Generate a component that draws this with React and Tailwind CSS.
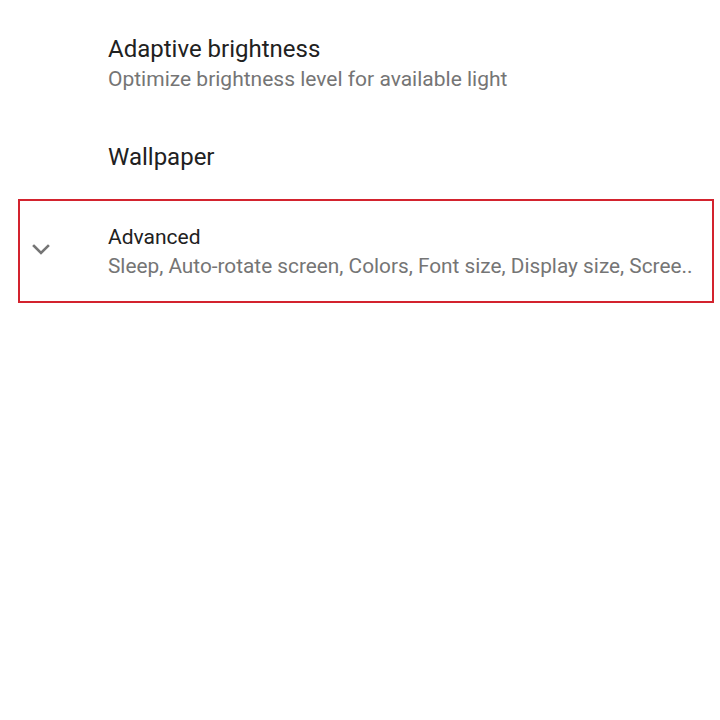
function Pref({ title, summary, className = '' }) {
  return (
    <div className={`pl-[108px] pr-6 ${className}`}>
      <p className="text-[24px] leading-[28px] text-[#212121]">{title}</p>
      {summary && (
        <p className="text-[21px] leading-[24px] text-[#757575] mt-[4px] whitespace-nowrap">{summary}</p>
      )}
    </div>
  )
}

export default function App() {
  return (
    <div className="w-[720px] h-[720px] bg-white overflow-hidden" style={{ fontFamily: 'Roboto, "Noto Sans", sans-serif' }}>
      <Pref
        className="pt-[35px]"
        title="Adaptive brightness"
        summary="Optimize brightness level for available light"
      />
      <Pref className="pt-[52px]" title="Wallpaper" />

      {/* Advanced, collapsed */}
      <div className="mt-[28px] ml-[18px] w-[696px] h-[104px] border-2 border-[#d3232e] flex items-start pt-[24px]">
        <div className="w-[88px] shrink-0 pl-[11px] pt-[18px]">
          <svg width="20" height="14" viewBox="0 0 20 14" fill="none" stroke="#757575" strokeWidth="2.6" strokeLinecap="square">
            <polyline points="3,3 10,10 17,3" />
          </svg>
        </div>
        <div className="min-w-0">
          <p className="text-[21px] leading-[24px] text-[#212121]">Advanced</p>
          <p className="text-[20.8px] leading-[24px] text-[#757575] mt-[5px] whitespace-nowrap">
            Sleep, Auto-rotate screen, Colors, Font size, Display size, Scree..
          </p>
        </div>
      </div>
    </div>
  )
}
